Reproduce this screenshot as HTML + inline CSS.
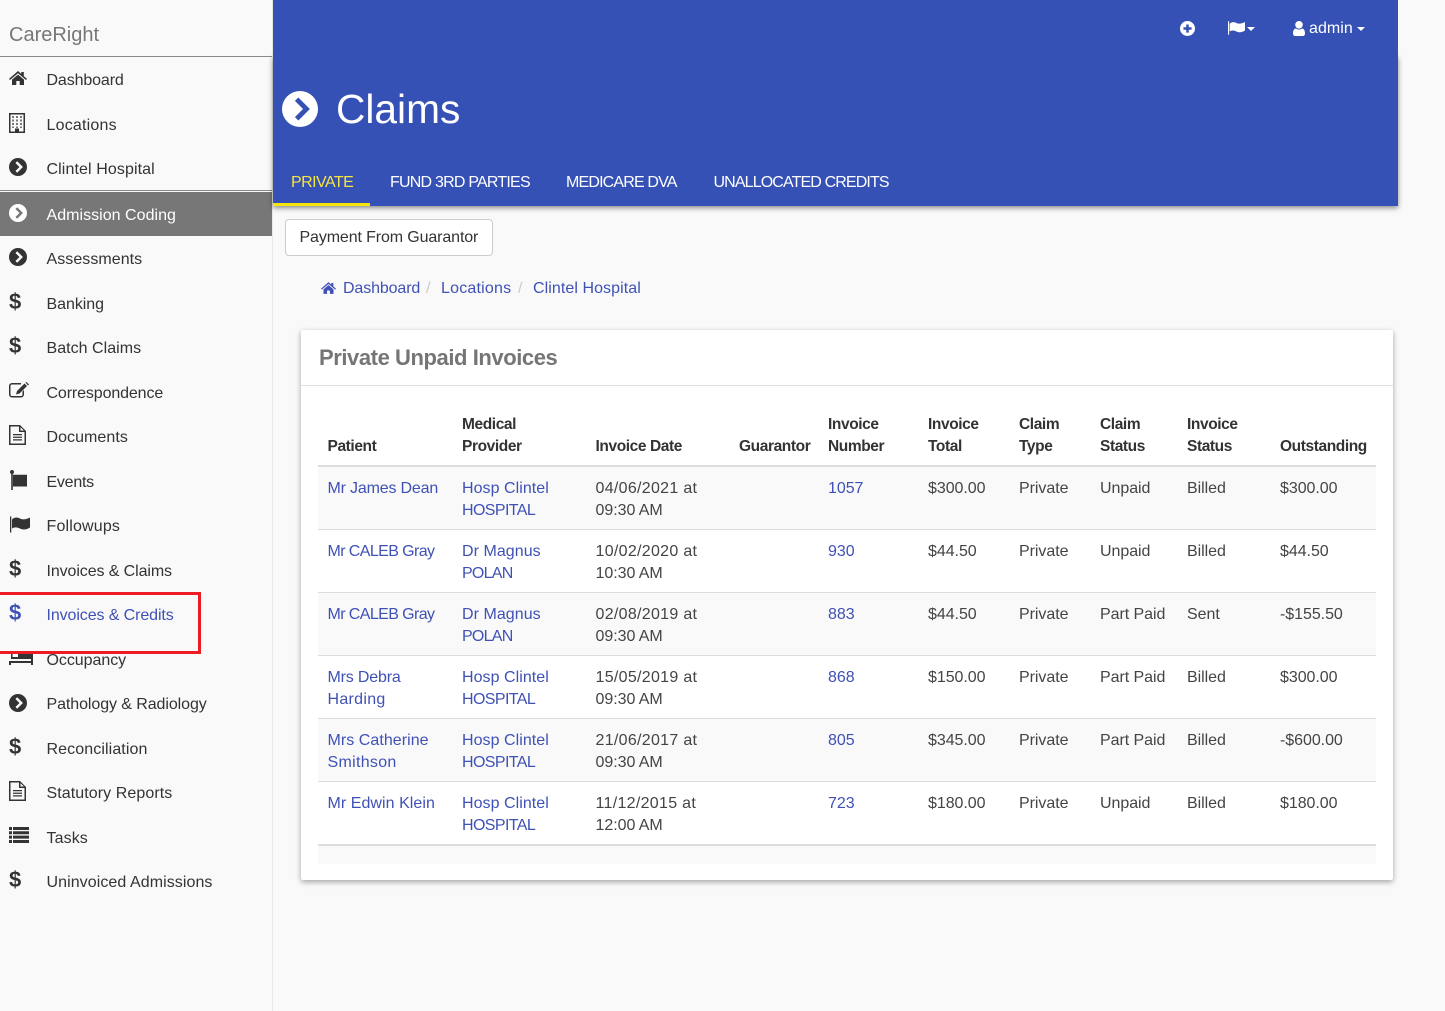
<!DOCTYPE html>
<html><head><meta charset="utf-8"><title>Claims</title>
<style>
*{box-sizing:border-box}
html,body{margin:0;padding:0;width:1445px;height:1011px;overflow:hidden;background:#f9f9f9;font-family:"Liberation Sans",sans-serif;font-size:16px;color:#333}
.abs,.n,.i,svg.i{position:absolute}
#side{position:absolute;left:0;top:0;width:273px;height:1011px;background:#f9f9f9;border-right:1px solid #e7e7e7}
.n{left:46.5px;height:22px;line-height:22px;white-space:nowrap;color:#333;letter-spacing:-.05px}
.d{position:absolute;left:9px;font-weight:bold;font-size:22px;line-height:24px;color:#333;width:12px;text-align:left}
svg.i{fill:#333}
#top{position:absolute;left:273px;top:0;width:1125px;height:206px;background:#3551b5}
#shadow{position:absolute;left:273px;top:56px;width:1125px;height:150px;box-shadow:0 2px 5px rgba(0,0,0,.45)}
.tab{position:absolute;top:172px;height:22px;line-height:19px;color:#fff;white-space:nowrap;padding-top:.5px}
a{color:#3f51b5;text-decoration:none}
.bc{position:absolute;top:278px;line-height:22px;height:22px;white-space:nowrap;color:#3f51b5}
#card{position:absolute;left:301px;top:330px;width:1092px;height:550px;background:#fff;border-radius:2px;box-shadow:0 2px 6px rgba(0,0,0,.35)}
table{position:absolute;left:17px;top:73px;width:1058px;table-layout:fixed;border-collapse:separate;border-spacing:0;line-height:22px}
th,td{padding:11px 0 7px 9.5px;text-align:left;vertical-align:top;white-space:nowrap;font-weight:normal}
th{vertical-align:bottom;font-weight:bold;font-size:15.5px;letter-spacing:-.4px;border-bottom:2px solid #ddd;color:#333}
td{border-bottom:1px solid #ddd;color:#444;height:63px;letter-spacing:-.05px}
tr.g td{background:#f9f9f9}
tr.l td{border-bottom:2px solid #ddd;height:64px}
.a{letter-spacing:-.18px}.b{letter-spacing:-.6px}.c{letter-spacing:-.75px}.t{letter-spacing:.3px}.u{letter-spacing:.3px}.v{letter-spacing:.05px}
</style></head>
<body>
<svg width="0" height="0" style="position:absolute"><defs>
<symbol id="cc" viewBox="0 0 24 24"><path fill-rule="evenodd" d="M12 0a12 12 0 1 0 0 24a12 12 0 0 0 0-24zM8.600 6.600L10.900 4.300L18.600 12L10.900 19.700L8.600 17.400L14 12z"/></symbol>
<symbol id="home" viewBox="0 0 18 14"><path d="M9 0L12.300 2.900V1H14.800V5.100L18 7.900L17 9L9 2.200L1 9L0 7.900zM3 8.600L9 3.600L15 8.600V14H10.700V10H7.300V14H3z"/></symbol>
<symbol id="bld" viewBox="0 0 16 20"><path fill-rule="evenodd" d="M0 0H16V20H0zM1.500 1.500V18.500H6V15.500H10V18.500H14.500V1.500z"/><path d="M3 3h2v2H3zM7 3h2v2H7zM11 3h2v2h-2zM3 6.500h2v2H3zM7 6.500h2v2H7zM11 6.500h2v2h-2zM3 10h2v2H3zM7 10h2v2H7zM11 10h2v2h-2zM3 13.500h2v1.500H3zM7 13.500h2v1.500H7zM11 13.500h2v1.500h-2z" opacity=".65"/></symbol>
<symbol id="edit" viewBox="0 0 20 16"><path d="M3 1H12V2.500H3A1.500 1.500 0 0 0 1.500 4V12.500A1.500 1.500 0 0 0 3 14H12A1.500 1.500 0 0 0 13.500 12.500V9.500L15 8V12.500A3 3 0 0 1 12 15.500H3A3 3 0 0 1 0 12.500V4A3 3 0 0 1 3 1z"/><path d="M15.500 1.500L18 4L10.500 11.500L7 12.500L8 9zM16.500.5L17.500 0L20 2.500L19 3.500z"/></symbol>
<symbol id="file" viewBox="0 0 17 20"><path fill-rule="evenodd" d="M0 0H11L17 6V20H0zM1.500 1.500V18.500H15.500V7H10V1.500zM11.500 2.200V5.500H15z"/><path d="M4 9H13V10.300H4zM4 11.600H13V12.900H4zM4 14.200H13V15.500H4z"/></symbol>
<symbol id="flag" viewBox="0 0 17 20"><circle cx="2" cy="2" r="2"/><path d="M1.200 3H2.800V20H1.200zM3 4.800H17V16.500H3z"/></symbol>
<symbol id="flags" viewBox="0 0 20 16"><path d="M0 0H1.300V16H0zM2 3C5 0 8 1 11 2.500C14 3.500 17 2.500 20 1V11C17 13 14 13.500 11 12.500C8 11 5 10 2 12z"/></symbol>
<symbol id="list" viewBox="0 0 20 16"><path d="M0 0H3V3H0zM4 0H20V3H4zM0 4.300H3V7.300H0zM4 4.300H20V7.300H4zM0 8.600H3V11.600H0zM4 8.600H20V11.600H4zM0 13H3V16H0zM4 13H20V16H4z"/></symbol>
<symbol id="bed" viewBox="0 0 24 14"><path d="M0 0H2V8H22V3H9V6H3.500V3H2V0zM0 10H24V14H22V12H2V14H0z"/><path d="M22 3h2v7h-2z"/></symbol>
</defs></svg>

<div id="side">
<div class="abs" style="left:9px;top:22px;font-size:20px;line-height:26px;color:#777;letter-spacing:0">CareRight</div>
<div class="abs" style="left:0;top:56px;width:272px;height:1px;background:#888"></div>
<div class="abs" style="left:0;top:190px;width:272px;height:1px;background:#888"></div>
<div class="abs" style="left:0;top:192px;width:272px;height:44px;background:#777"></div>

<svg class="i" style="left:9px;top:71px;width:18px;height:14px"><use href="#home"/></svg>
<div class="n" style="top:69.500px;letter-spacing:-.12px">Dashboard</div>
<svg class="i" style="left:9px;top:113px;width:16px;height:20px"><use href="#bld"/></svg>
<div class="n" style="top:114.500px;letter-spacing:.2px">Locations</div>
<svg class="i" style="left:9px;top:158px;width:18px;height:18px"><use href="#cc"/></svg>
<div class="n" style="top:158.500px;letter-spacing:.1px">Clintel Hospital</div>
<svg class="i" style="left:9px;top:204px;width:18px;height:18px;fill:#fff"><use href="#cc"/></svg>
<div class="n" style="top:204.500px;color:#fff;letter-spacing:.03px">Admission Coding</div>
<svg class="i" style="left:9px;top:248px;width:18px;height:18px"><use href="#cc"/></svg>
<div class="n" style="top:248.500px;letter-spacing:.05px">Assessments</div>
<div class="d" style="top:290px">$</div>
<div class="n" style="top:293.500px">Banking</div>
<div class="d" style="top:334px">$</div>
<div class="n" style="top:337.500px;letter-spacing:.03px">Batch Claims</div>
<svg class="i" style="left:9px;top:382px;width:20px;height:16px"><use href="#edit"/></svg>
<div class="n" style="top:382.500px;letter-spacing:-.12px">Correspondence</div>
<svg class="i" style="left:9px;top:425px;width:17px;height:20px"><use href="#file"/></svg>
<div class="n" style="top:426.500px;letter-spacing:.05px">Documents</div>
<svg class="i" style="left:10px;top:470px;width:17px;height:20px"><use href="#flag"/></svg>
<div class="n" style="top:471.500px;letter-spacing:-.25px">Events</div>
<svg class="i" style="left:10px;top:516px;width:20px;height:17px"><use href="#flags"/></svg>
<div class="n" style="top:515.500px;letter-spacing:.17px">Followups</div>
<div class="d" style="top:557px">$</div>
<div class="n" style="top:560.500px;letter-spacing:-.1px">Invoices &amp; Claims</div>
<div class="d" style="top:601px;color:#3f51b5">$</div>
<div class="n" style="top:604.500px;letter-spacing:-.1px;color:#3f51b5">Invoices &amp; Credits</div>
<svg class="i" style="left:9px;top:651px;width:24px;height:14px"><use href="#bed"/></svg>
<div class="n" style="top:649.500px">Occupancy</div>
<svg class="i" style="left:9px;top:694px;width:18px;height:18px"><use href="#cc"/></svg>
<div class="n" style="top:693.500px;letter-spacing:-.08px">Pathology &amp; Radiology</div>
<div class="d" style="top:735px">$</div>
<div class="n" style="top:738.500px;letter-spacing:.1px">Reconciliation</div>
<svg class="i" style="left:9px;top:781px;width:17px;height:20px"><use href="#file"/></svg>
<div class="n" style="top:782.500px;letter-spacing:.08px">Statutory Reports</div>
<svg class="i" style="left:9px;top:827px;width:20px;height:16px"><use href="#list"/></svg>
<div class="n" style="top:827.500px;letter-spacing:.1px">Tasks</div>
<div class="d" style="top:868px">$</div>
<div class="n" style="top:871.500px;letter-spacing:.07px">Uninvoiced Admissions</div>
</div>

<div id="shadow"></div>
<div id="top"></div>
<div class="abs" style="left:273px;top:203px;width:97px;height:3px;background:#f5e50a"></div>

<svg class="i" style="left:1180px;top:21px;width:15px;height:15px;fill:#fff" viewBox="0 0 24 24"><path fill-rule="evenodd" d="M12 0a12 12 0 1 0 0 24a12 12 0 0 0 0-24zM10 5.500H14V10H18.500V14H14V18.500H10V14H5.500V10H10z"/></svg>
<svg class="i" style="left:1228px;top:21px;width:17px;height:14px;fill:#fff"><use href="#flags"/></svg>
<div class="abs" style="left:1247px;top:27px;border:4px solid transparent;border-top-color:#fff;border-bottom:0"></div>
<svg class="i" style="left:1293px;top:21px;width:12px;height:15px;fill:#fff" viewBox="0 0 12 15"><circle cx="6" cy="3.800" r="3.800"/><path d="M0 12.500C0 9 1.500 7.500 3 7.500C4 8.300 5 8.600 6 8.600C7 8.600 8 8.300 9 7.500C10.500 7.500 12 9 12 12.500C12 14 11 15 10 15H2C1 15 0 14 0 12.500z"/></svg>
<div class="abs" style="left:1309px;top:18px;line-height:22px;color:#fff;letter-spacing:.05px">admin</div>
<div class="abs" style="left:1357px;top:27px;border:4px solid transparent;border-top-color:#fff;border-bottom:0"></div>

<svg class="i" style="left:282px;top:90.500px;width:36px;height:36px;fill:#fff"><use href="#cc"/></svg>
<div class="abs" style="left:336px;top:85px;font-size:40.700px;line-height:48px;color:#fff;white-space:nowrap">Claims</div>

<div class="tab" style="left:291px;color:#f5e642;letter-spacing:-.55px">PRIVATE</div>
<div class="tab" style="left:390px;letter-spacing:-.78px">FUND 3RD PARTIES</div>
<div class="tab" style="left:566px;letter-spacing:-.83px">MEDICARE DVA</div>
<div class="tab" style="left:713.500px;letter-spacing:-.87px">UNALLOCATED CREDITS</div>

<div class="abs" style="left:285px;top:219px;width:208px;height:37px;background:#fff;border:1px solid #ccc;border-radius:4px;line-height:35px;padding-left:13.500px;color:#333;white-space:nowrap;letter-spacing:-.12px">Payment From Guarantor</div>

<svg class="i" style="left:321px;top:282px;width:15px;height:12px;fill:#3f51b5"><use href="#home"/></svg>
<div class="bc" style="left:343px;letter-spacing:-.12px">Dashboard</div>
<div class="bc" style="left:426px;color:#ccc">/</div>
<div class="bc" style="left:441px;letter-spacing:.2px">Locations</div>
<div class="bc" style="left:518px;color:#ccc">/</div>
<div class="bc" style="left:533px;letter-spacing:.07px">Clintel Hospital</div>

<div id="card">
<div class="abs" style="left:18px;top:12.500px;font-size:22px;line-height:30px;font-weight:bold;color:#757575;white-space:nowrap;letter-spacing:-.43px">Private Unpaid Invoices</div>
<div class="abs" style="left:0;top:55px;width:1092px;height:1px;background:#e0e0e0"></div>
<table>
<colgroup><col style="width:134.500px"><col style="width:133.500px"><col style="width:143.500px"><col style="width:89px"><col style="width:100px"><col style="width:91px"><col style="width:81px"><col style="width:87px"><col style="width:93px"><col style="width:105.500px"></colgroup>
<thead><tr><th>Patient</th><th>Medical<br>Provider</th><th>Invoice Date</th><th>Guarantor</th><th>Invoice<br>Number</th><th>Invoice<br>Total</th><th>Claim<br>Type</th><th>Claim<br>Status</th><th>Invoice<br>Status</th><th>Outstanding</th></tr></thead>
<tbody>
<tr class="g"><td><a class="a">Mr James Dean</a></td><td><a class="v">Hosp Clintel</a><br><a class="b">HOSPITAL</a></td><td><span class="t">04/06/2021 at</span><br>09:30 AM</td><td></td><td><a>1057</a></td><td>$300.00</td><td>Private</td><td>Unpaid</td><td>Billed</td><td>$300.00</td></tr>
<tr><td><a class="b">Mr CALEB Gray</a></td><td><a class="v">Dr Magnus</a><br><a class="c">POLAN</a></td><td><span class="t">10/02/2020 at</span><br>10:30 AM</td><td></td><td><a>930</a></td><td>$44.50</td><td>Private</td><td>Unpaid</td><td>Billed</td><td>$44.50</td></tr>
<tr class="g"><td><a class="b">Mr CALEB Gray</a></td><td><a class="v">Dr Magnus</a><br><a class="c">POLAN</a></td><td><span class="t">02/08/2019 at</span><br>09:30 AM</td><td></td><td><a>883</a></td><td>$44.50</td><td>Private</td><td>Part Paid</td><td>Sent</td><td>-$155.50</td></tr>
<tr><td><a class="a">Mrs Debra</a><br><a class="u">Harding</a></td><td><a class="v">Hosp Clintel</a><br><a class="b">HOSPITAL</a></td><td><span class="t">15/05/2019 at</span><br>09:30 AM</td><td></td><td><a>868</a></td><td>$150.00</td><td>Private</td><td>Part Paid</td><td>Billed</td><td>$300.00</td></tr>
<tr class="g"><td><a class="v">Mrs Catherine</a><br><a class="u">Smithson</a></td><td><a class="v">Hosp Clintel</a><br><a class="b">HOSPITAL</a></td><td><span class="t">21/06/2017 at</span><br>09:30 AM</td><td></td><td><a>805</a></td><td>$345.00</td><td>Private</td><td>Part Paid</td><td>Billed</td><td>-$600.00</td></tr>
<tr class="l"><td><a class="v">Mr Edwin Klein</a></td><td><a class="v">Hosp Clintel</a><br><a class="b">HOSPITAL</a></td><td><span class="t">11/12/2015 at</span><br>12:00 AM</td><td></td><td><a>723</a></td><td>$180.00</td><td>Private</td><td>Unpaid</td><td>Billed</td><td>$180.00</td></tr>
</tbody>
</table>
<div class="abs" style="left:17px;top:516px;width:1058px;height:18px;background:#f9f9f9"></div>
</div>

<div class="abs" style="left:-3px;top:592px;width:204px;height:62px;border:3px solid #ed1c24"></div>
</body></html>
